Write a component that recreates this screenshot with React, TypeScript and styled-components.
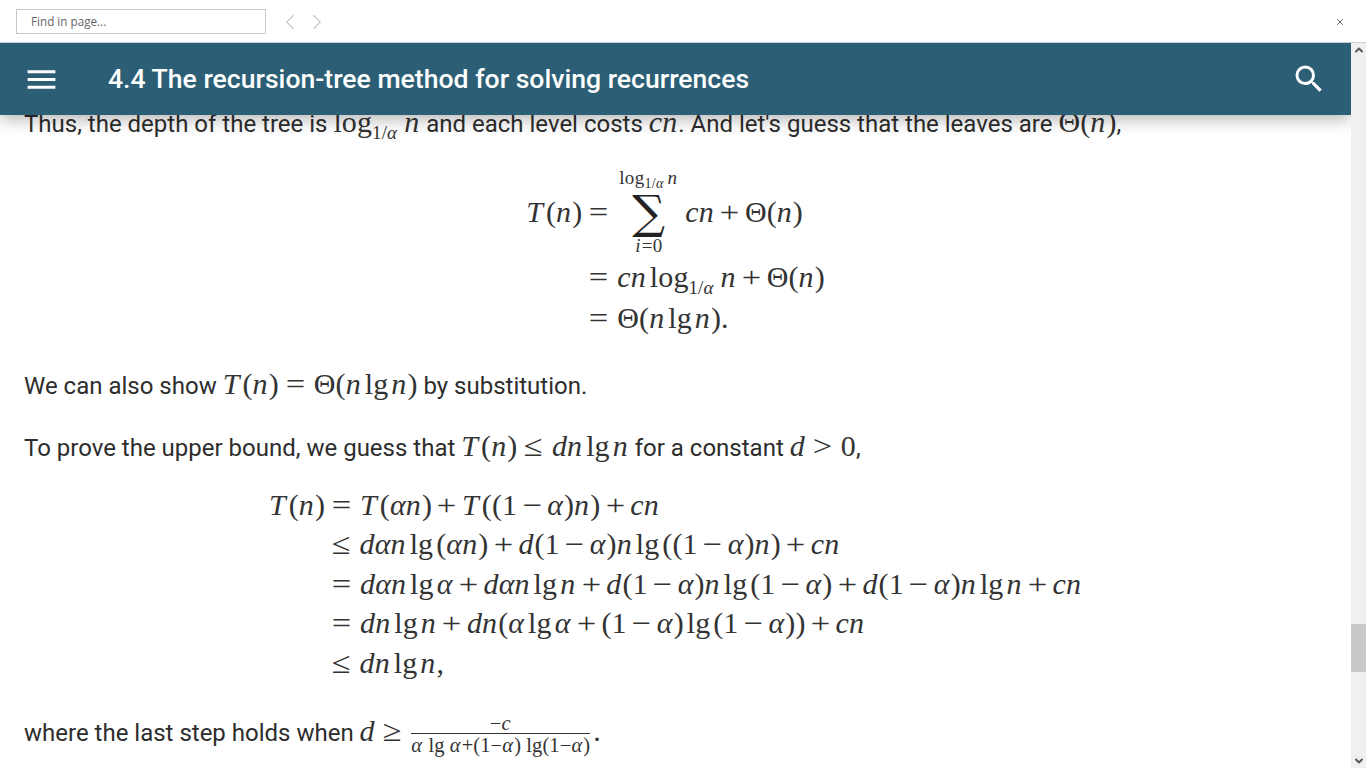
import styled, { createGlobalStyle } from 'styled-components'
import { MdMenu, MdSearch } from 'react-icons/md'
import { ChevronLeft, ChevronRight, ChevronUp, ChevronDown, X } from 'lucide-react'
import type { ReactNode } from 'react'

const GlobalStyle = createGlobalStyle`
    * {
        box-sizing: border-box;
    }

    html, body {
        margin: 0;
        height: 100%;
        overflow: hidden;
        background: #fff;
    }
`

const Page = styled.div`
    display: flex;
    flex-direction: column;
    height: 768px;
    width: 1366px;
`

const FindBar = styled.div`
    display: flex;
    align-items: center;
    flex: none;
    height: 43px;
    padding: 1px 16px 0;
    border-bottom: 1px solid #c9ced6;
    background: #fff;
`

const FindInput = styled.div`
    width: 250px;
    height: 25px;
    padding-left: 14px;
    border: 1px solid #c8c8c8;
    color: #666;
    font: 11.7px/23px 'Open Sans', sans-serif;
`

const FindNav = styled.div`
    display: flex;
    gap: 1px;
    margin-left: 11px;
    color: #c8c8c8;
`

const FindClose = styled.div`
    display: flex;
    margin-left: auto;
    margin-right: 5px;
    color: #444;
`

const Viewport = styled.div`
    display: flex;
    flex: 1;
    min-height: 0;
`

const Reader = styled.div`
    flex: 1;
    min-width: 0;
    overflow: hidden;
`

const Header = styled.header`
    position: relative;
    z-index: 2;
    display: flex;
    align-items: center;
    height: 72px;
    padding: 0 24px 0 23px;
    background: #2c5f76;
    color: #fff;
    box-shadow: 0 4px 16px rgba(0, 0, 0, 0.3);
`

const Title = styled.h1`
    flex: 1;
    margin: 0 0 0 48px;
    font: 500 26.6px/32px Roboto, sans-serif;
`

const Content = styled.main`
    padding: 0 24px;
    color: #2d2d2d;
    font: 400 24px/36px Roboto, sans-serif;
`

const Paragraph = styled.p<{ $gap?: number }>`
    margin: ${({ $gap }) => $gap ?? 24}px 0 0;
    white-space: nowrap;
`

const Lead = styled(Paragraph)`
    margin-top: -11px;
`

const Math = styled.span`
    font-family: 'Liberation Serif', serif;
    font-size: 30px;
    letter-spacing: 0.1px;
    color: #333;
    white-space: nowrap;

    i {
        font-style: italic;
        margin-right: 1px;
    }
`

const TVar = styled.i`
    && {
        margin-right: 3px;
    }
`

const Rel = styled.span`
    display: inline-block;
    margin: 0 10px 0 8px;
    transform: scaleX(1.15);
`

const Bin = styled.span`
    display: inline-block;
    margin: 0 6.5px;
    transform: scaleX(1.15);
`

const Fn = styled.span`
    margin: 0 3px;
`

const Sub = styled.sub`
    font-size: 19px;
    line-height: 0;
    vertical-align: -7px;
    margin-right: 6px;

    ${Fn} + & {
        margin-left: -3px;
    }
`

const Display = styled.div<{ $top: number }>`
    display: flex;
    justify-content: center;
    margin-top: ${({ $top }) => $top}px;
`

const AlignGrid = styled.div<{ $row: number }>`
    display: grid;
    grid-template-columns: auto auto;
    grid-auto-rows: minmax(${({ $row }) => $row}px, auto);
    align-items: center;
`

const Lhs = styled.div`
    justify-self: end;
`

const SumRow = styled.div`
    display: flex;
    align-items: center;
`

const SumStack = styled.span`
    display: inline-flex;
    flex-direction: column;
    align-items: center;
    margin-right: 5px;
    width: 63px;
`

const SumLimit = styled.span`
    font-size: 19px;
    line-height: 22px;
    letter-spacing: 0.3px;

    sub {
        font-size: 14px;
        line-height: 0;
        vertical-align: -4px;
        margin-right: 3px;
    }
`

const SumSign = styled.span`
    font: 400 46px/46px 'DejaVu Serif', serif;
    color: #222;
`

const Frac = styled.span`
    display: inline-flex;
    flex-direction: column;
    align-items: center;
    vertical-align: 11px;
    margin: 0 3px 0 1px;
    font-size: 20.5px;
    line-height: 18px;
`

const FracTop = styled.span`
    padding-bottom: 1px;
    border-bottom: 1px solid #333;
    align-self: stretch;
    text-align: center;
`

const FracBottom = styled.span`
    padding-top: 2px;
`

const Scrollbar = styled.div`
    position: relative;
    flex: none;
    display: flex;
    flex-direction: column;
    align-items: center;
    justify-content: space-between;
    width: 15px;
    padding: 1px 0;
    background: #f0f0f0;
    color: #5a5a5a;
`

const ScrollThumb = styled.div`
    position: absolute;
    top: 581px;
    left: 0;
    width: 100%;
    height: 48px;
    background: #c9c9c9;
`

const Row = ({ lhs, children }: { lhs?: ReactNode; children: ReactNode }) => (
    <>
        <Lhs>{lhs}</Lhs>
        <div>{children}</div>
    </>
)

export default function App() {
    return (
        <Page>
            <GlobalStyle />
            <FindBar>
                <FindInput>Find in page...</FindInput>
                <FindNav>
                    <ChevronLeft size={26} strokeWidth={1} />
                    <ChevronRight size={26} strokeWidth={1} />
                </FindNav>
                <FindClose>
                    <X size={10} strokeWidth={2} />
                </FindClose>
            </FindBar>
            <Viewport>
                <Reader>
                    <Header>
                        <MdMenu size={37} />
                        <Title>4.4 The recursion-tree method for solving recurrences</Title>
                        <MdSearch size={36} />
                    </Header>
                    <Content>
                        <Lead>
                            Thus, the depth of the tree is{' '}
                            <Math>log<Sub>1/<i>α</i></Sub><i>n</i></Math> and each level costs{' '}
                            <Math><i>cn</i></Math>. And let's guess that the leaves are{' '}
                            <Math>Θ(<i>n</i>)</Math>,
                        </Lead>
                        <Display $top={25}>
                            <Math>
                                <AlignGrid $row={40.5}>
                                    <Row lhs={<><TVar>T</TVar>(<i>n</i>)</>}>
                                        <SumRow>
                                            <Rel>=</Rel>
                                            <SumStack>
                                                <SumLimit>log<sub>1/<i>α</i></sub><i>n</i></SumLimit>
                                                <SumSign>∑</SumSign>
                                                <SumLimit><i>i</i>=0</SumLimit>
                                            </SumStack>
                                            <span><i>cn</i><Bin>+</Bin>Θ(<i>n</i>)</span>
                                        </SumRow>
                                    </Row>
                                    <Row>
                                        <Rel>=</Rel><i>cn</i><Fn>log</Fn><Sub>1/<i>α</i></Sub><i>n</i><Bin>+</Bin>Θ(<i>n</i>)
                                    </Row>
                                    <Row>
                                        <Rel>=</Rel>Θ(<i>n</i><Fn>lg</Fn><i>n</i>).
                                    </Row>
                                </AlignGrid>
                            </Math>
                        </Display>
                        <Paragraph $gap={28}>
                            We can also show{' '}
                            <Math><TVar>T</TVar>(<i>n</i>)<Rel>=</Rel>Θ(<i>n</i><Fn>lg</Fn><i>n</i>)</Math> by substitution.
                        </Paragraph>
                        <Paragraph>
                            To prove the upper bound, we guess that{' '}
                            <Math><TVar>T</TVar>(<i>n</i>)<Rel>≤</Rel><i>dn</i><Fn>lg</Fn><i>n</i></Math> for a constant{' '}
                            <Math><i>d</i><Rel>&gt;</Rel>0</Math>,
                        </Paragraph>
                        <Display $top={19}>
                            <Math>
                                <AlignGrid $row={39.5}>
                                    <Row lhs={<><TVar>T</TVar>(<i>n</i>)</>}>
                                        <Rel>=</Rel><TVar>T</TVar>(<i>αn</i>)<Bin>+</Bin><TVar>T</TVar>((1<Bin>−</Bin><i>α</i>)<i>n</i>)<Bin>+</Bin><i>cn</i>
                                    </Row>
                                    <Row>
                                        <Rel>≤</Rel><i>dαn</i><Fn>lg</Fn>(<i>αn</i>)<Bin>+</Bin><i>d</i>(1<Bin>−</Bin><i>α</i>)<i>n</i><Fn>lg</Fn>((1<Bin>−</Bin><i>α</i>)<i>n</i>)<Bin>+</Bin><i>cn</i>
                                    </Row>
                                    <Row>
                                        <Rel>=</Rel><i>dαn</i><Fn>lg</Fn><i>α</i><Bin>+</Bin><i>dαn</i><Fn>lg</Fn><i>n</i><Bin>+</Bin><i>d</i>(1<Bin>−</Bin><i>α</i>)<i>n</i><Fn>lg</Fn>(1<Bin>−</Bin><i>α</i>)<Bin>+</Bin><i>d</i>(1<Bin>−</Bin><i>α</i>)<i>n</i><Fn>lg</Fn><i>n</i><Bin>+</Bin><i>cn</i>
                                    </Row>
                                    <Row>
                                        <Rel>=</Rel><i>dn</i><Fn>lg</Fn><i>n</i><Bin>+</Bin><i>dn</i>(<i>α</i><Fn>lg</Fn><i>α</i><Bin>+</Bin>(1<Bin>−</Bin><i>α</i>)<Fn>lg</Fn>(1<Bin>−</Bin><i>α</i>))<Bin>+</Bin><i>cn</i>
                                    </Row>
                                    <Row>
                                        <Rel>≤</Rel><i>dn</i><Fn>lg</Fn><i>n</i>,
                                    </Row>
                                </AlignGrid>
                            </Math>
                        </Display>
                        <Paragraph $gap={30}>
                            where the last step holds when{' '}
                            <Math>
                                <i>d</i><Rel>≥</Rel>
                                <Frac>
                                    <FracTop>−<i>c</i></FracTop>
                                    <FracBottom><i>α</i> lg <i>α</i>+(1−<i>α</i>) lg(1−<i>α</i>)</FracBottom>
                                </Frac>.
                            </Math>
                        </Paragraph>
                    </Content>
                </Reader>
                <Scrollbar>
                    <ChevronUp size={12} strokeWidth={4} />
                    <ScrollThumb />
                    <ChevronDown size={12} strokeWidth={4} />
                </Scrollbar>
            </Viewport>
        </Page>
    )
}
